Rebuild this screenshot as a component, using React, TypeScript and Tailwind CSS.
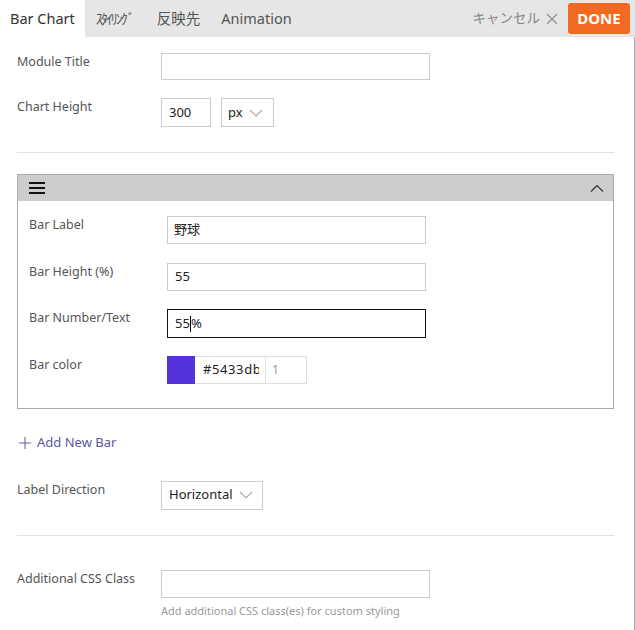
import React from 'react';

const font = { fontFamily: '"Noto Sans", "Noto Sans CJK JP", sans-serif' };

const Chevron = ({ up = false }: { up?: boolean }) => (
  <svg width="14" height="8" viewBox="0 0 14 8" fill="none" stroke="currentColor" strokeWidth="1.2">
    {up ? <path d="M1 7.5 L7 1.5 L13 7.5" /> : <path d="M1 1 L7 7 L13 1" />}
  </svg>
);

const Label = ({ children }: { children: React.ReactNode }) => (
  <div className="w-[144px] shrink-0 text-[12.5px] leading-[18px] text-[#555]">{children}</div>
);

const Row = ({ label, children, className = '' }: { label: string; children: React.ReactNode; className?: string }) => (
  <div className={`flex items-start ${className}`}>
    <Label>{label}</Label>
    {children}
  </div>
);

export default function App() {
  return (
    <div className="w-[635px] h-[630px] bg-white overflow-hidden" style={font}>
      {/* Tabs */}
      <div className="flex h-[37px] items-stretch bg-[#e6e6e6]">
        <div className="flex items-center bg-white px-[10px] text-[14.5px] text-[#333]">Bar Chart</div>
        <div className="flex items-center pl-[11px] pr-[14px] text-[14px] text-[#555] tracking-[-2px]">ｽﾀｲﾘﾝｸﾞ</div>
        <div className="flex items-center px-[10px] text-[14.5px] text-[#555]">反映先</div>
        <div className="flex items-center pl-[11px] text-[14.5px] text-[#555]">Animation</div>
        <div className="ml-auto flex items-center gap-[6px] pr-[10px] text-[13.5px] text-[#888]">
          <span>キャンセル</span>
          <svg width="12" height="12" viewBox="0 0 12 12" stroke="#888" strokeWidth="1.2">
            <path d="M1 1 L11 11 M11 1 L1 11" />
          </svg>
        </div>
        <div className="flex items-center pr-[5px]">
          <button className="h-[31px] w-[62px] rounded-[3px] bg-[#f26a22] text-[15px] font-bold text-white">DONE</button>
        </div>
      </div>

      <div className="border-r border-[#aaa] h-[593px] pl-[17px] pr-[20px]">
        <Row label="Module Title" className="pt-[16px]">
          <input className="h-[27px] w-[269px] border border-[#ccc] outline-none" />
        </Row>
        <Row label="Chart Height" className="pt-[18px]">
          <div className="flex gap-[10px]">
            <div className="flex h-[29px] w-[50px] items-center border border-[#ccc] px-[7px] text-[13px] text-[#222]">300</div>
            <div className="flex h-[29px] w-[53px] items-center gap-[6px] border border-[#ccc] px-[6px] text-[13px] text-[#222]">
              px
              <span className="text-[#aaa]"><Chevron /></span>
            </div>
          </div>
        </Row>

        <div className="mt-[25px] border-t border-[#e2e2e2]" />

        {/* Bar item */}
        <div className="mt-[21px] border border-[#aaa]">
          <div className="flex h-[26px] items-center justify-between bg-[#cccccc] pl-[11px] pr-[9px]">
            <svg width="16" height="12" viewBox="0 0 16 12" fill="#111">
              <rect x="0" y="0" width="16" height="2" />
              <rect x="0" y="5" width="16" height="2" />
              <rect x="0" y="10" width="16" height="2" />
            </svg>
            <span className="text-[#333]"><Chevron up /></span>
          </div>
          <div className="pl-[11px] pb-[24px]">
            <Row label="Bar Label" className="pt-[15px] [&>div:first-child]:w-[138px]">
              <div className="flex h-[28px] w-[259px] items-center border border-[#ccc] px-[6px] text-[13px] text-[#222]">野球</div>
            </Row>
            <Row label="Bar Height (%)" className="pt-[19px] [&>div:first-child]:w-[138px]">
              <div className="flex h-[28px] w-[259px] items-center border border-[#ccc] px-[7px] text-[13px] text-[#222]">55</div>
            </Row>
            <Row label="Bar Number/Text" className="pt-[18px] [&>div:first-child]:w-[138px]">
              <div className="flex h-[29px] w-[259px] items-center border border-[#111] px-[7px] text-[13px] text-[#222]">
                55<span className="inline-block h-[16px] w-px bg-black" />%
              </div>
            </Row>
            <Row label="Bar color" className="pt-[18px] [&>div:first-child]:w-[138px]">
              <div className="flex h-[28px]">
                <div className="w-[28px] bg-[#5433db]" />
                <div className="flex w-[70px] items-center border-y border-[#e0e0e0] pl-[8px]">
                  <div className="w-[56px] overflow-hidden whitespace-nowrap text-[13px] tracking-[0.6px] text-[#222]">#5433db</div>
                </div>
                <div className="flex w-[42px] items-center border border-[#e0e0e0] pl-[6px] text-[12px] text-[#999]">1</div>
              </div>
            </Row>
          </div>
        </div>

        <div className="mt-[24px] flex items-center gap-[6px] pl-[2px] text-[13px] text-[#5c5a9a]">
          <svg width="12" height="12" viewBox="0 0 12 12" stroke="#6a68a8" strokeWidth="1.1">
            <path d="M6 0 V12 M0 6 H12" />
          </svg>
          Add New Bar
        </div>

        <Row label="Label Direction" className="pt-[28px]">
          <div className="flex h-[29px] w-[102px] items-center gap-[6px] border border-[#ccc] px-[7px] text-[13px] text-[#222]">
            Horizontal
            <span className="text-[#aaa]"><Chevron /></span>
          </div>
        </Row>

        <div className="mt-[25px] border-t border-[#e2e2e2]" />

        <Row label="Additional CSS Class" className="pt-[34px]">
          <div>
            <input className="h-[28px] w-[269px] border border-[#ccc] outline-none" />
            <div className="mt-[5px] text-[11px] text-[#999]">Add additional CSS class(es) for custom styling</div>
          </div>
        </Row>
      </div>
    </div>
  );
}
